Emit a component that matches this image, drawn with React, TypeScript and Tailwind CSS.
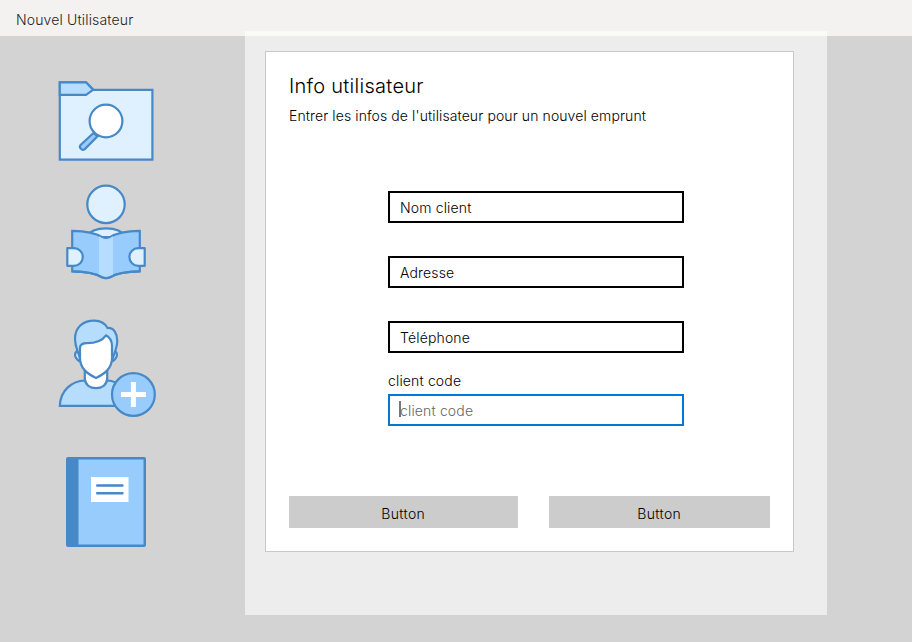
import React from "react";

const line = "#4788c7";

function FolderSearchIcon() {
  return (
    <svg width="115" height="100" viewBox="0 0 115 100" fill="none" stroke={line} strokeWidth="2.2">
      <path d="M9.800 12.300H36L43.500 19.800H102.400V89.600H9.800Z" fill="#dff0fe" />
      <path d="M9.800 12.300H36L43 19.800L36 24.800H9.800Z" fill="#b6dcfe" />
      <path d="M43.500 63L30.600 74.900a3 3 0 0 0 4.200 4.200L47.500 66.400Z" fill="#98ccfd" />
      <circle cx="56" cy="51" r="16.400" fill="#fff" />
    </svg>
  );
}

function ReaderIcon() {
  return (
    <svg width="115" height="115" viewBox="0 0 115 115" fill="none" stroke={line} strokeWidth="2.2">
      <circle cx="56" cy="29.400" r="18.700" fill="#dff0fe" />
      <path d="M36 62C43 50.500 69 50.500 76 62Z" fill="#dff0fe" />
      <path d="M22.200 55.800C36 56 45 57.500 52 62.200Q56 64 60 62.200C67 57.500 76 56 89.800 55.800V96.300C76 96.500 67 98 60 102.200Q56 104 52 102.200C45 98 36 96.500 22.200 96.300Z" fill="#98ccfd" />
      <path d="M49 61.300L52 63.100Q56 65 60 63.100L63 61.300V102L60 101.100Q56 102.800 52 101.100L49 99.300Z" fill="#b6dcfe" stroke="none" />
      <path d="M22.200 96.300C36 96.500 45 98 52 102.200Q56 104 60 102.200C67 98 76 96.500 89.800 96.300" />
      <path d="M17.300 73.200H24a8.800 8.800 0 0 1 0 17.600H17.300Z" fill="#dff0fe" strokeLinejoin="round" />
      <path d="M94.700 73.200H88.200a8.800 8.800 0 0 0 0 17.600H94.700Z" fill="#dff0fe" strokeLinejoin="round" />
    </svg>
  );
}

function AddUserIcon() {
  return (
    <svg width="115" height="115" viewBox="0 0 115 115" fill="none" stroke={line} strokeWidth="2.2">
      <path d="M9.800 95.800C10.500 80 22 71 35 70.500H57C68 71 80 80 81.500 95.800Z" fill="#b6dcfe" />
      <path d="M34.800 60V69C35.500 75 40 78.200 46 78.200S56.500 75 57.200 69V60Z" fill="#fff" />
      <path d="M30.500 40.300C25 40 23.800 45 26.500 48.500C28 51 30 51.500 31.500 51.500M61.500 40.300C67 40 68.200 45 65.500 48.500C64 51 62 51.500 60.500 51.500" fill="#dff0fe" />
      <path d="M30 49C28.500 41 25 38 25 29C25 18 32 10.700 44.500 10.700C51 10.700 55 13.500 57.500 18C64 17.500 67.300 24 67.300 31C67.300 37 65 42 62 50L46 55Z" fill="#b6dcfe" />
      <path d="M30 38C30 34.500 32 33.200 37 33.200C46 33.200 52 31 56 25.300C60 27.500 62 31 62 36V48C62 59 54 64 46 68C38 64 30 59 30 48Z" fill="#fff" strokeLinejoin="round" />
      <circle cx="83.400" cy="84.500" r="21.400" fill="#98ccfd" />
      <path d="M83.400 72V97M71 84.500H96" stroke="#fff" strokeWidth="5" />
    </svg>
  );
}

function BookIcon() {
  return (
    <svg width="115" height="115" viewBox="0 0 115 115">
      <rect x="16" y="12" width="80" height="90" rx="2" fill={line} />
      <rect x="28.500" y="14.500" width="65" height="85" fill="#98ccfd" />
      <rect x="41" y="32" width="37.500" height="25" fill="#fff" />
      <path d="M47.200 40.500H72.500M47.200 48.200H72.500" stroke={line} strokeWidth="2.400" strokeLinecap="round" />
    </svg>
  );
}

function Field({ label }: { label: string }) {
  return (
    <div className="flex h-8 w-full items-center border-2 border-black bg-white pt-px pl-2.5 text-black">
      {label}
    </div>
  );
}

export default function App() {
  return (
    <div className="flex h-[642px] w-[912px] flex-col overflow-hidden bg-[#d3d3d3] font-['Inter',sans-serif] text-[14px] leading-5 font-light tracking-[0.15px] text-black">
      <header className="flex h-9 shrink-0 items-center bg-[#f3f2f0] px-4 pt-1">
        <h1 className="text-[#252423]">Nouvel Utilisateur</h1>
      </header>
      <div className="flex flex-1 items-start">
        <nav className="flex w-[245px] shrink-0 flex-col pt-[34px] pl-[50px]">
          <FolderSearchIcon />
          <div className="mt-[5px]"><ReaderIcon /></div>
          <div className="mt-5"><AddUserIcon /></div>
          <div className="mt-5"><BookIcon /></div>
        </nav>
        <main className="-mt-[5px] h-[584px] w-[582px] bg-white/60 px-5 pt-5">
          <section className="flex h-[501px] w-[529px] flex-col border border-[#c8c8c8] bg-white px-[23px] pt-5">
            <h2 className="text-[20px] leading-7 tracking-[0.28px]">Info utilisateur</h2>
            <p className="mt-1.5 tracking-[0.1px]">Entrer les infos de l'utilisateur pour un nouvel emprunt</p>
            <div className="mt-[65px] ml-[99px] flex w-[296px] flex-col">
              <div className="flex flex-col gap-[33px]">
                <Field label="Nom client" />
                <Field label="Adresse" />
                <Field label="Téléphone" />
              </div>
              <label className="mt-[18px] h-[23px]">client code</label>
              <div className="flex h-8 items-center border-2 border-[#0078d4] bg-white pt-px pl-2.5 text-[#666]">
                <span className="-mt-[3px] -mr-px -ml-px h-4 w-0.5 shrink-0 bg-[#777]" />
                client code
              </div>
            </div>
            <div className="mt-[70px] flex justify-between">
              <button className="h-8 w-[228.500px] bg-[#cccccc] pt-[3px] tracking-[0.350px]">Button</button>
              <button className="h-8 w-[221.500px] bg-[#cccccc] pt-[3px] tracking-[0.350px]">Button</button>
            </div>
          </section>
        </main>
      </div>
    </div>
  );
}
